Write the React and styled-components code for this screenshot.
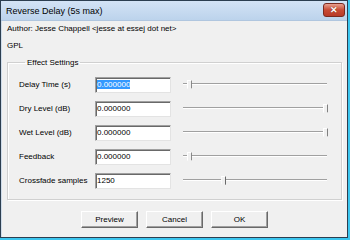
import React from "react";
import styled, { createGlobalStyle } from "styled-components";

const Global = createGlobalStyle`
  html, body { margin: 0; padding: 0; background: #3cc6ef; overflow: hidden; }
  body { width: 350px; height: 240px; }
`;

const Window = styled.div`
  width: 348px;
  height: 238px;
  box-sizing: border-box;
  border: 1px solid #2c3e50;
  background: #f0f0f0;
  display: flex;
  flex-direction: column;
  font-family: "Liberation Sans", Arial, sans-serif;
  font-size: 8px;
  color: #000;
`;

const TitleBar = styled.div`
  height: 19px;
  flex: none;
  display: flex;
  align-items: center;
  justify-content: space-between;
  padding: 0 2px 0 5px;
  background: linear-gradient(#d3e3f5, #bcd3ec);
  border-bottom: 1px solid #b0c6df;
  font-size: 9px;
`;

const CloseBtn = styled.div`
  width: 20px;
  height: 12px;
  margin-top: -1px;
  border: 1px solid #7a2a20;
  border-radius: 3px;
  background: linear-gradient(#e8a090, #c84a34 50%, #b83a28);
  display: flex;
  align-items: center;
  justify-content: center;
  color: #fff;
  font-size: 9px;
  font-weight: bold;
  line-height: 1;
  text-shadow: 0 0 1px #5a1a10;
`;

const Body = styled.div`
  flex: 1;
  display: flex;
  flex-direction: column;
  padding: 2px 5px 0 5px;
  border-left: 1px solid #cfdcea;
`;

const Line = styled.div`
  height: 12px;
  line-height: 12px;
  margin-bottom: ${(p) => p.$gap || 0}px;
`;

const Group = styled.fieldset`
  margin: 0;
  padding: 10px 12px 10px 11px;
  border: 1px solid #d0d0d0;
  box-shadow: inset 1px 1px 0 #fff, 1px 1px 0 #fff;
`;

const Legend = styled.legend`
  padding: 0 2px;
  margin-left: 6px;
  font-size: 8px;
`;

const Rows = styled.div`
  display: grid;
  grid-template-columns: 76px 76px 1fr;
  row-gap: 8px;
  align-items: center;
`;

const Label = styled.div`
  height: 16px;
  line-height: 16px;
  white-space: nowrap;
`;

const Input = styled.div`
  height: 16px;
  box-sizing: border-box;
  background: #fff;
  border-top: 1px solid #a0a0a0;
  border-left: 1px solid #a0a0a0;
  border-right: 1px solid #e3e3e3;
  border-bottom: 1px solid #e3e3e3;
  box-shadow: inset 1px 1px 0 #696969;
  padding: 0 2px 0 1px;
  line-height: 14px;
  font-size: 8px;
  white-space: nowrap;
`;

const Selected = styled.span`
  background: #3399ff;
  color: #fff;
`;

const Slider = styled.div`
  position: relative;
  height: 16px;
  margin: 0 2px 0 12px;
`;

const Track = styled.div`
  position: absolute;
  left: 0;
  right: 0;
  top: 6px;
  height: 2px;
  border-top: 1px solid #a0a0a0;
  border-bottom: 1px solid #fff;
  background: #6d6d6d;
  box-sizing: border-box;
`;

const Thumb = styled.div`
  position: absolute;
  top: 3px;
  width: 3px;
  height: 9px;
  margin-left: -2px;
  background: #f0f0f0;
  border-left: 1px solid #fff;
  border-right: 1px solid #696969;
  border-top: 1px solid #fff;
  clip-path: polygon(0 0, 100% 0, 100% 80%, 50% 100%, 0 80%);
`;

const Buttons = styled.div`
  display: flex;
  justify-content: center;
  gap: 8px;
  margin-top: 11px;
`;

const Button = styled.div`
  width: 57px;
  height: 17px;
  box-sizing: border-box;
  border-top: 1px solid #fff;
  border-left: 1px solid #fff;
  border-right: 1px solid #696969;
  border-bottom: 1px solid #696969;
  box-shadow: inset -1px -1px 0 #a0a0a0;
  background: #f0f0f0;
  display: flex;
  align-items: center;
  justify-content: center;
  font-size: 8px;
`;

const settings = [
  { label: "Delay Time (s)", value: "0.000000", pos: 0.04, selected: true },
  { label: "Dry Level (dB)", value: "0.000000", pos: 0.985 },
  { label: "Wet Level (dB)", value: "0.000000", pos: 0.985 },
  { label: "Feedback", value: "0.000000", pos: 0.04 },
  { label: "Crossfade samples", value: "1250", pos: 0.28 },
];

export default function App() {
  return (
    <>
      <Global />
      <Window>
        <TitleBar>
          <span>Reverse Delay (5s max)</span>
          <CloseBtn>✕</CloseBtn>
        </TitleBar>
        <Body>
          <Line $gap={5}>Author: Jesse Chappell &lt;jesse at essej dot net&gt;</Line>
          <Line $gap={6}>GPL</Line>
          <Group>
            <Legend>Effect Settings</Legend>
            <Rows>
              {settings.map((s) => (
                <React.Fragment key={s.label}>
                  <Label>{s.label}</Label>
                  <Input>{s.selected ? <Selected>{s.value}</Selected> : s.value}</Input>
                  <Slider>
                    <Track />
                    <Thumb style={{ left: `${s.pos * 100}%` }} />
                  </Slider>
                </React.Fragment>
              ))}
            </Rows>
          </Group>
          <Buttons>
            <Button>Preview</Button>
            <Button>Cancel</Button>
            <Button>OK</Button>
          </Buttons>
        </Body>
      </Window>
    </>
  );
}
